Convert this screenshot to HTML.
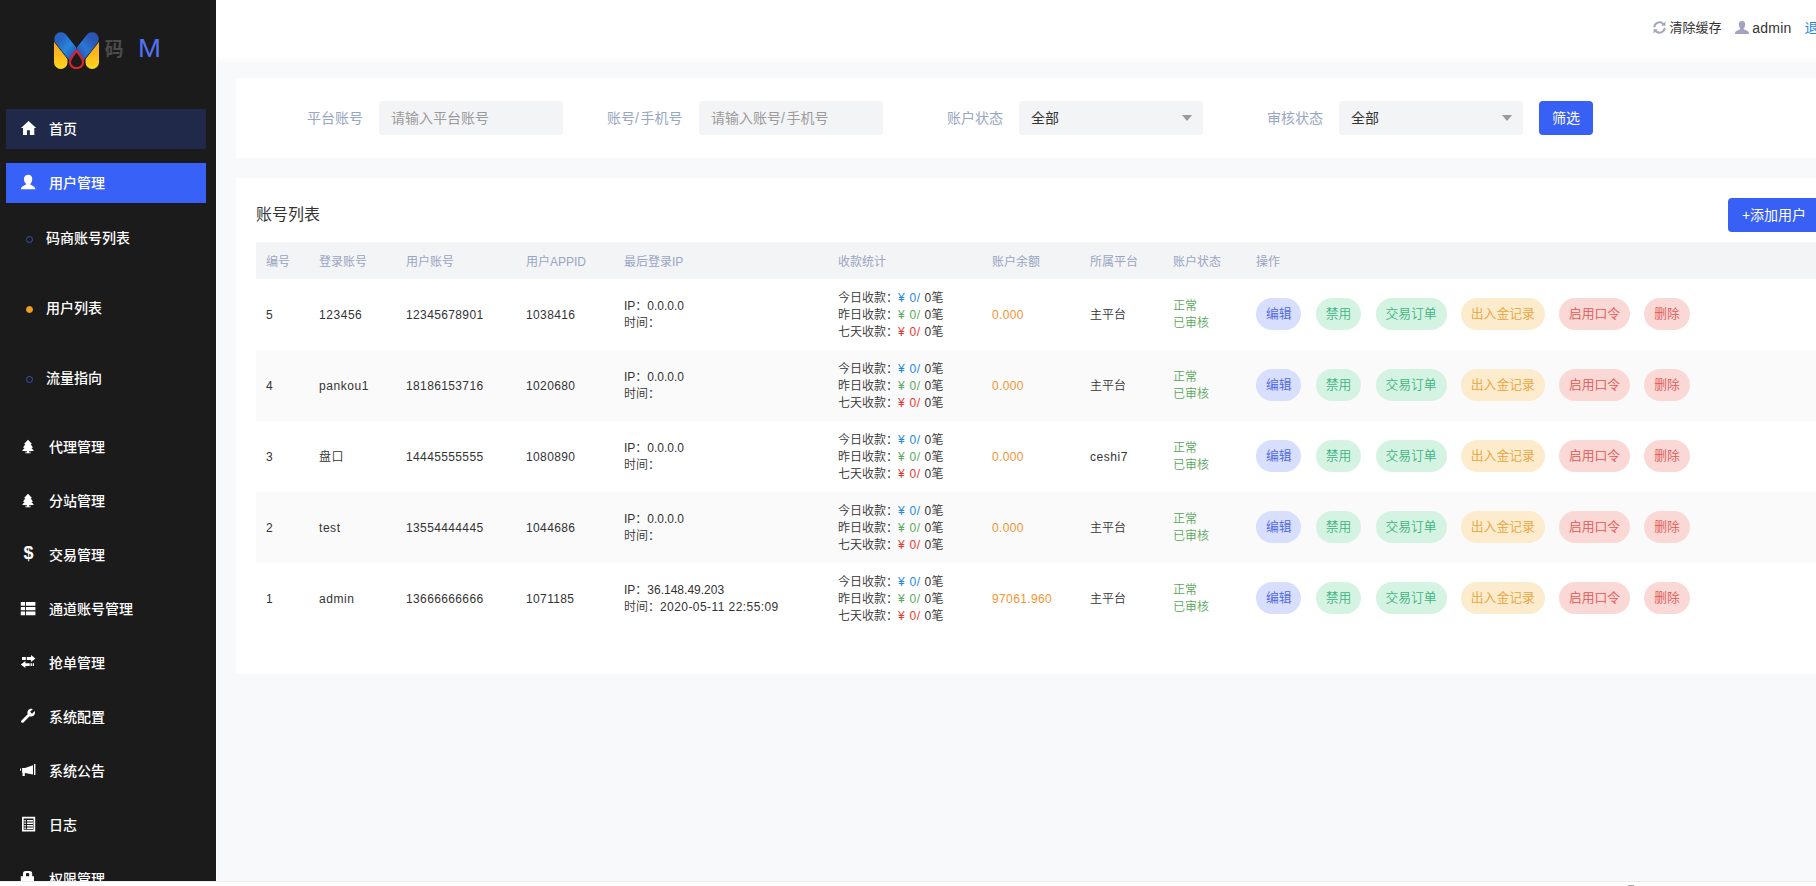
<!DOCTYPE html>
<html lang="zh-CN">
<head>
<meta charset="utf-8">
<title>用户列表</title>
<style>
*{box-sizing:border-box;margin:0;padding:0}
html,body{width:1816px;height:886px;overflow:hidden;background:#f8f9fb}
body{font-family:"Liberation Sans","Noto Sans CJK SC",sans-serif;font-size:12px;color:#333;position:relative}
a{text-decoration:none;color:inherit}
ul{list-style:none}

/* ---------- sidebar ---------- */
#side{position:absolute;left:0;top:0;width:216px;height:880.5px;background:#1c1b1b;overflow:hidden;color:#fff}
#logo{position:absolute;left:0;top:0;width:216px;height:100px}
#logo svg{position:absolute;left:53.5px;top:31.5px}
#logo .t1{position:absolute;left:104.8px;top:38px;font-size:18.8px;line-height:24px;color:#4b4b4b;font-weight:700}
#logo .t2{position:absolute;left:137.5px;top:34px;font-size:25.5px;line-height:28px;color:#5272f6;transform:scaleX(1.08);transform-origin:0 0}
.nav{position:absolute;left:6px;width:200px;height:40px;line-height:40px;font-size:14px;color:#fff;font-weight:500}
.nav .ic{position:absolute;left:14px;top:11px;width:18px;height:18px}
.nav .tx{position:absolute;left:43px;top:0;white-space:nowrap}
.nav.home{background:#20294a}
.nav.act{background:#3861f8}
.sub{position:absolute;left:0;width:216px;height:20px;line-height:20px;font-size:14px;color:#fff;font-weight:500}
.sub i{position:absolute;left:25.7px;top:8.4px;width:7px;height:7px;border-radius:50%;border:1.6px solid #3d4db4}
.sub.on i{background:#f0a020;border-color:#f0a020}
.sub span{position:absolute;left:46px;top:0;white-space:nowrap}

/* ---------- main ---------- */
#top{position:absolute;left:216px;top:0;width:1600px;height:58px;background:#fff}
#top .it{position:absolute;top:18px;height:20px;line-height:20px;font-size:13px;color:#333;white-space:nowrap}
#top .it svg{position:absolute;top:2px}
.card{position:absolute;left:236px;width:1700px;background:#fff}
#filter{top:78px;height:80px}
#filter .lb{position:absolute;top:23px;height:34px;line-height:34px;font-size:14px;color:#99a6c4;white-space:nowrap}
#filter .inp{position:absolute;top:23px;width:184px;height:34px;line-height:34px;background:#f3f4f6;border-radius:4px;padding-left:12px;font-size:14px;color:#9b9b9b;white-space:nowrap}
#filter .sel{color:#333}
#filter .sel:after{content:"";position:absolute;right:11px;top:14px;border:5px solid transparent;border-top:6px solid #9a9a9a}
.btn{position:absolute;height:34px;line-height:34px;background:#3860f4;color:#fff;font-size:14px;border-radius:4px;text-align:center;white-space:nowrap}
#list{top:178px;height:496px}
#list h3{position:absolute;left:20px;top:25px;font-size:16px;line-height:24px;font-weight:400;color:#333}
table{position:absolute;left:20px;top:64px;width:1680px;border-collapse:collapse;table-layout:fixed}
th{height:37px;padding-bottom:1px;background:#f3f4f6;color:#9aa4c3;font-weight:400;font-size:12px;text-align:left;padding-left:10px;white-space:nowrap}
td{height:71px;padding-left:10px;padding-top:2px;font-size:12px;font-weight:350;line-height:17px;color:#333;white-space:nowrap;vertical-align:middle}
tr.alt td{background:#fafafa}
.cb{color:#1e88e5}.cg{color:#5aa85a}.cr{color:#e53935}.co{color:#f59331}
.ok{color:#5aa85a}
.n{letter-spacing:.37px}
.cb.n,.cg.n,.cr.n{letter-spacing:.7px}
.l{letter-spacing:.55px}
.up{position:relative;top:-1px}
.pill{position:relative;top:-2px;display:inline-block;height:32px;line-height:32px;padding:0 9.9px;border-radius:16px;font-size:12.8px;margin-right:14.4px;vertical-align:middle}
.p1{background:#d7dffd;color:#4c66e6}
.p2{background:#d5f3e3;color:#3eb37f}
.p3{background:#fdebcd;color:#eaa338}
.p4{background:#fad8d6;color:#e0564f}
#hbar{position:absolute;left:0;top:881px;width:1816px;height:5px;background:#fff;border-top:1px solid #ececec}
</style>
</head>
<body>

<div id="side">
  <div id="logo">
    <svg width="45" height="37" viewBox="0 0 45 37">
      <defs>
        <linearGradient id="lgy" x1="0" y1="0" x2="0" y2="1"><stop offset="0" stop-color="#f59a1b"/><stop offset="0.6" stop-color="#fdb91c"/><stop offset="1" stop-color="#ffd81f"/></linearGradient>
        <linearGradient id="lgb" x1="0" y1="0" x2="1" y2="1"><stop offset="0" stop-color="#2a62c2"/><stop offset="0.5" stop-color="#2588dc"/><stop offset="1" stop-color="#2c4fb0"/></linearGradient>
        <linearGradient id="lgb2" x1="1" y1="0" x2="0" y2="1"><stop offset="0" stop-color="#2a56b4"/><stop offset="0.5" stop-color="#2a78d6"/><stop offset="1" stop-color="#2c4fb0"/></linearGradient>
        <clipPath id="cl"><rect x="0" y="0" width="22.5" height="37"/></clipPath>
        <clipPath id="cr"><rect x="22.5" y="0" width="22.5" height="37"/></clipPath>
      </defs>
      <rect x="0" y="0" width="13.5" height="37" rx="6.75" fill="url(#lgy)"/>
      <rect x="31.5" y="0" width="13.5" height="37" rx="6.75" fill="url(#lgy)"/>
      <g clip-path="url(#cl)"><path d="M7 7 L20.5 24.2" stroke="#14161c" stroke-width="14.6" stroke-linecap="round" fill="none"/><path d="M7 7 L20.5 24.2" stroke="url(#lgb)" stroke-width="13.4" stroke-linecap="round" fill="none"/></g>
      <g clip-path="url(#cr)"><path d="M38 7 L24.5 24.2" stroke="#14161c" stroke-width="14.6" stroke-linecap="round" fill="none"/><path d="M38 7 L24.5 24.2" stroke="url(#lgb2)" stroke-width="13.4" stroke-linecap="round" fill="none"/></g>
      <path d="M22.5 18.6 C21 21 15.9 26.5 15.9 30 A6.6 6.2 0 0 0 29.1 30 C29.1 26.5 24 21 22.5 18.6 Z" fill="#1c1b1b" stroke="#d6242f" stroke-width="2.2" stroke-linejoin="round"/>
    </svg>
    <span class="t1">码</span><span class="t2">M</span>
  </div>

  <a class="nav home" style="top:109px"><svg class="ic" viewBox="0 0 18 18"><path d="M8.6 0.9 L16.2 8.1 H14.3 V15 H9.9 V10.3 H7 V15 H3 V8.1 H1 Z" fill="#fff"/></svg><span class="tx">首页</span></a>
  <a class="nav act" style="top:163px"><svg class="ic" viewBox="0 0 18 18"><path d="M8.2 0.8 C5.6 0.8 4 2.6 4 5 C4 7.4 5 9 6 9.7 V10.5 C5.4 11.2 1.2 12 0.8 15.2 H15.4 C15 12 10.8 11.2 10.4 10.5 V9.7 C11.4 9 12.2 7.4 12.2 5 C12.2 2.6 10.8 0.8 8.2 0.8 Z" fill="#fff"/></svg><span class="tx">用户管理</span></a>

  <a class="sub" style="top:228px"><i></i><span>码商账号列表</span></a>
  <a class="sub on" style="top:298px"><i></i><span>用户列表</span></a>
  <a class="sub" style="top:368px"><i></i><span>流量指向</span></a>

  <a class="nav" style="top:427px"><svg class="ic" viewBox="0 0 18 18"><path d="M8 1.8 L12 5.9 L10.6 6.2 L13 9.6 L11.4 9.9 L14 12.8 Q11 13.5 9 13.2 L9 14.2 L10.8 14.6 L10.8 15.2 L5.2 15.2 L5.2 14.6 L7 14.2 L7 13.2 Q5 13.5 2 12.8 L4.6 9.9 L3 9.6 L5.4 6.2 L4 5.9 Z" fill="#fff"/></svg><span class="tx">代理管理</span></a>
  <a class="nav" style="top:481px"><svg class="ic" viewBox="0 0 18 18"><path d="M8 1.8 L12 5.9 L10.6 6.2 L13 9.6 L11.4 9.9 L14 12.8 Q11 13.5 9 13.2 L9 14.2 L10.8 14.6 L10.8 15.2 L5.2 15.2 L5.2 14.6 L7 14.2 L7 13.2 Q5 13.5 2 12.8 L4.6 9.9 L3 9.6 L5.4 6.2 L4 5.9 Z" fill="#fff"/></svg><span class="tx">分站管理</span></a>
  <a class="nav" style="top:535px"><span class="ic" style="font:700 18px/18px 'Liberation Sans',sans-serif;text-align:center;color:#fff;left:13.6px;top:8.6px">$</span><span class="tx">交易管理</span></a>
  <a class="nav" style="top:589px"><svg class="ic" viewBox="0 0 18 18"><path d="M0.8 2 H5 V5.7 H0.8 Z M5.9 2 H15.4 V5.7 H5.9 Z M0.8 6.9 H5 V10.3 H0.8 Z M5.9 6.9 H15.4 V10.3 H5.9 Z M0.8 11.5 H5 V15.3 H0.8 Z M5.9 11.5 H15.4 V15.3 H5.9 Z" fill="#fff"/></svg><span class="tx">通道账号管理</span></a>
  <a class="nav" style="top:643px"><svg class="ic" viewBox="0 0 18 18"><path d="M2 2.9 H5.8 V5.9 H2 Z M6.8 2.9 H11 V0.9 L15.4 4.4 L11 7.9 V5.9 H6.8 Z M14 9.2 H12.7 V12 H14 Z M11.9 9.2 H10.5 V12 H11.9 Z M9.7 9.2 H5.4 V7.1 L0.8 10.6 L5.4 14.1 V12 H9.7 Z" fill="#fff"/></svg><span class="tx">抢单管理</span></a>
  <a class="nav" style="top:697px"><svg class="ic" viewBox="0 0 18 18"><path transform="translate(-0.45,-0.95) scale(0.96)" d="M15.8 4.2 L13 7 L11 5 L13.8 2.2 C12 1.5 10 2 9 3.4 C8 4.8 8 6.2 8.5 7.4 L2 13.9 C1.4 14.5 1.4 15.4 2 16 C2.6 16.6 3.5 16.6 4.1 16 L10.6 9.5 C11.8 10 13.2 10 14.6 9 C16 8 16.5 6 15.8 4.2 Z" fill="#fff"/></svg><span class="tx">系统配置</span></a>
  <a class="nav" style="top:751px"><svg class="ic" viewBox="0 0 18 18"><path d="M0 6.4 H0.9 V8.8 H0 Z M2.1 5.9 H5 L13 3.2 V12.6 L5 10.9 H4.8 V14 H2.5 V10.9 H2.1 Z M14 2 H15.4 V13 H14 Z" fill="#fff"/></svg><span class="tx">系统公告</span></a>
  <a class="nav" style="top:805px"><svg class="ic" viewBox="0 0 18 18"><path d="M2 0.8 H15.2 V15.4 H2 Z M3.7 2.5 V13.7 H13.5 V2.5 Z M4.4 4 H5.8 V5.4 H4.4 Z M7 4 H13 V5.4 H7 Z M4.4 6.5 H5.8 V7.9 H4.4 Z M7 6.5 H13 V7.9 H7 Z M4.4 9 H5.8 V10.4 H4.4 Z M7 9 H13 V10.4 H7 Z M4.4 11.5 H5.8 V12.9 H4.4 Z M7 11.5 H13 V12.9 H7 Z" fill="#fff" fill-rule="evenodd"/></svg><span class="tx">日志</span></a>
  <a class="nav" style="top:859px"><svg class="ic" viewBox="0 0 18 18"><path d="M3 6.2 V3.4 Q3 0.9 5.5 0.9 H9.7 Q12.2 0.9 12.2 3.4 V6.2 H14 V15 H0.8 V6.2 Z M6 6.2 H9.2 V4.2 Q9.2 3.1 8.2 3.1 H7 Q6 3.1 6 4.2 Z" fill="#fff" fill-rule="evenodd"/></svg><span class="tx">权限管理</span></a>
</div>

<div id="top">
  <span class="it" style="left:1436.6px;padding-left:17px"><svg width="13" height="13" viewBox="0 0 13 13" style="left:0;top:3px"><path d="M1.3 6.2 A5.2 5.2 0 0 1 10.4 3.1 M11.7 6.8 A5.2 5.2 0 0 1 2.6 9.9" fill="none" stroke="#a3a3c0" stroke-width="1.9"/><path d="M12.4 0.5 V4.7 H8.2 Z M0.6 12.5 V8.3 H4.8 Z" fill="#a3a3c0"/></svg>清除缓存</span>
  <span class="it" style="left:1519px;padding-left:17.3px;font-size:14px;letter-spacing:.2px"><svg width="14" height="13" viewBox="2 2 14 13.4" preserveAspectRatio="none" style="left:0;top:3px"><path d="M9 2 C6.8 2 5.6 3.6 5.8 5.8 C6 8 6.8 9 7.4 9.6 C7.4 10.6 6.8 11 5 11.6 C3 12.3 2 13 2 15.4 L16 15.4 C16 13 15 12.3 13 11.6 C11.2 11 10.6 10.6 10.6 9.6 C11.2 9 12 8 12.2 5.8 C12.4 3.6 11.2 2 9 2 Z" fill="#a3a3c0"/></svg>admin</span>
  <span class="it" style="left:1588.5px;color:#1e88e5;font-size:14px">退出</span>
</div>

<div class="card" id="filter">
  <span class="lb" style="left:71px">平台账号</span><span class="inp" style="left:143px">请输入平台账号</span>
  <span class="lb" style="left:371px">账号<span style="letter-spacing:1.6px">/</span>手机号</span><span class="inp" style="left:463px">请输入账号<span style="letter-spacing:1.6px">/</span>手机号</span>
  <span class="lb" style="left:711px">账户状态</span><span class="inp sel" style="left:783px">全部</span>
  <span class="lb" style="left:1031px">审核状态</span><span class="inp sel" style="left:1103px">全部</span>
  <a class="btn" style="left:1303px;top:23px;width:54px">筛选</a>
</div>

<div class="card" id="list">
  <h3>账号列表</h3>
  <a class="btn" style="left:1492px;top:20px;width:92px">+添加用户</a>
  <table>
    <colgroup><col style="width:53px"><col style="width:87px"><col style="width:120px"><col style="width:98px"><col style="width:214px"><col style="width:154px"><col style="width:98px"><col style="width:83px"><col style="width:83px"><col></colgroup>
    <thead><tr><th>编号</th><th>登录账号</th><th>用户账号</th><th>用户APPID</th><th>最后登录IP</th><th>收款统计</th><th>账户余额</th><th>所属平台</th><th>账户状态</th><th>操作</th></tr></thead>
    <tbody>
    <tr><td class="n">5</td><td class="l">123456</td><td class="n">12345678901</td><td class="n">1038416</td><td><div class="up">IP：0.0.0.0<br>时间：</div></td><td>今日收款：<span class="cb n">¥ 0/</span><span class="n"> 0</span>笔<br>昨日收款：<span class="cg n">¥ 0/</span><span class="n"> 0</span>笔<br>七天收款：<span class="cr n">¥ 0/</span><span class="n"> 0</span>笔</td><td class="co n">0.000</td><td>主平台</td><td class="ok"><div class="up">正常<br>已审核</div></td><td><a class="pill p1">编辑</a><a class="pill p2">禁用</a><a class="pill p2">交易订单</a><a class="pill p3">出入金记录</a><a class="pill p4">启用口令</a><a class="pill p4">删除</a></td></tr>
    <tr class="alt"><td class="n">4</td><td class="l">pankou1</td><td class="n">18186153716</td><td class="n">1020680</td><td><div class="up">IP：0.0.0.0<br>时间：</div></td><td>今日收款：<span class="cb n">¥ 0/</span><span class="n"> 0</span>笔<br>昨日收款：<span class="cg n">¥ 0/</span><span class="n"> 0</span>笔<br>七天收款：<span class="cr n">¥ 0/</span><span class="n"> 0</span>笔</td><td class="co n">0.000</td><td>主平台</td><td class="ok"><div class="up">正常<br>已审核</div></td><td><a class="pill p1">编辑</a><a class="pill p2">禁用</a><a class="pill p2">交易订单</a><a class="pill p3">出入金记录</a><a class="pill p4">启用口令</a><a class="pill p4">删除</a></td></tr>
    <tr><td class="n">3</td><td class="l">盘口</td><td class="n">14445555555</td><td class="n">1080890</td><td><div class="up">IP：0.0.0.0<br>时间：</div></td><td>今日收款：<span class="cb n">¥ 0/</span><span class="n"> 0</span>笔<br>昨日收款：<span class="cg n">¥ 0/</span><span class="n"> 0</span>笔<br>七天收款：<span class="cr n">¥ 0/</span><span class="n"> 0</span>笔</td><td class="co n">0.000</td><td class="l">ceshi7</td><td class="ok"><div class="up">正常<br>已审核</div></td><td><a class="pill p1">编辑</a><a class="pill p2">禁用</a><a class="pill p2">交易订单</a><a class="pill p3">出入金记录</a><a class="pill p4">启用口令</a><a class="pill p4">删除</a></td></tr>
    <tr class="alt"><td class="n">2</td><td class="l">test</td><td class="n">13554444445</td><td class="n">1044686</td><td><div class="up">IP：0.0.0.0<br>时间：</div></td><td>今日收款：<span class="cb n">¥ 0/</span><span class="n"> 0</span>笔<br>昨日收款：<span class="cg n">¥ 0/</span><span class="n"> 0</span>笔<br>七天收款：<span class="cr n">¥ 0/</span><span class="n"> 0</span>笔</td><td class="co n">0.000</td><td>主平台</td><td class="ok"><div class="up">正常<br>已审核</div></td><td><a class="pill p1">编辑</a><a class="pill p2">禁用</a><a class="pill p2">交易订单</a><a class="pill p3">出入金记录</a><a class="pill p4">启用口令</a><a class="pill p4">删除</a></td></tr>
    <tr><td class="n">1</td><td class="l">admin</td><td class="n">13666666666</td><td class="n">1071185</td><td><div class="up">IP：36.148.49.203<br>时间：<span class="n" style="letter-spacing:.43px">2020-05-11 22:55:09</span></div></td><td>今日收款：<span class="cb n">¥ 0/</span><span class="n"> 0</span>笔<br>昨日收款：<span class="cg n">¥ 0/</span><span class="n"> 0</span>笔<br>七天收款：<span class="cr n">¥ 0/</span><span class="n"> 0</span>笔</td><td class="co n">97061.960</td><td>主平台</td><td class="ok"><div class="up">正常<br>已审核</div></td><td><a class="pill p1">编辑</a><a class="pill p2">禁用</a><a class="pill p2">交易订单</a><a class="pill p3">出入金记录</a><a class="pill p4">启用口令</a><a class="pill p4">删除</a></td></tr>
    </tbody>
  </table>
</div>

<div id="hbar"></div>
<div style="position:absolute;left:216px;top:58px;width:1600px;height:6px;background:linear-gradient(#fdfdfe,#f8f9fb)"></div>
<div style="position:absolute;left:216px;top:58px;width:1.3px;height:822.5px;background:#fff"></div>
<div style="position:absolute;left:1628px;top:885px;width:6px;height:1px;background:#aaa"></div>
</body>
</html>
